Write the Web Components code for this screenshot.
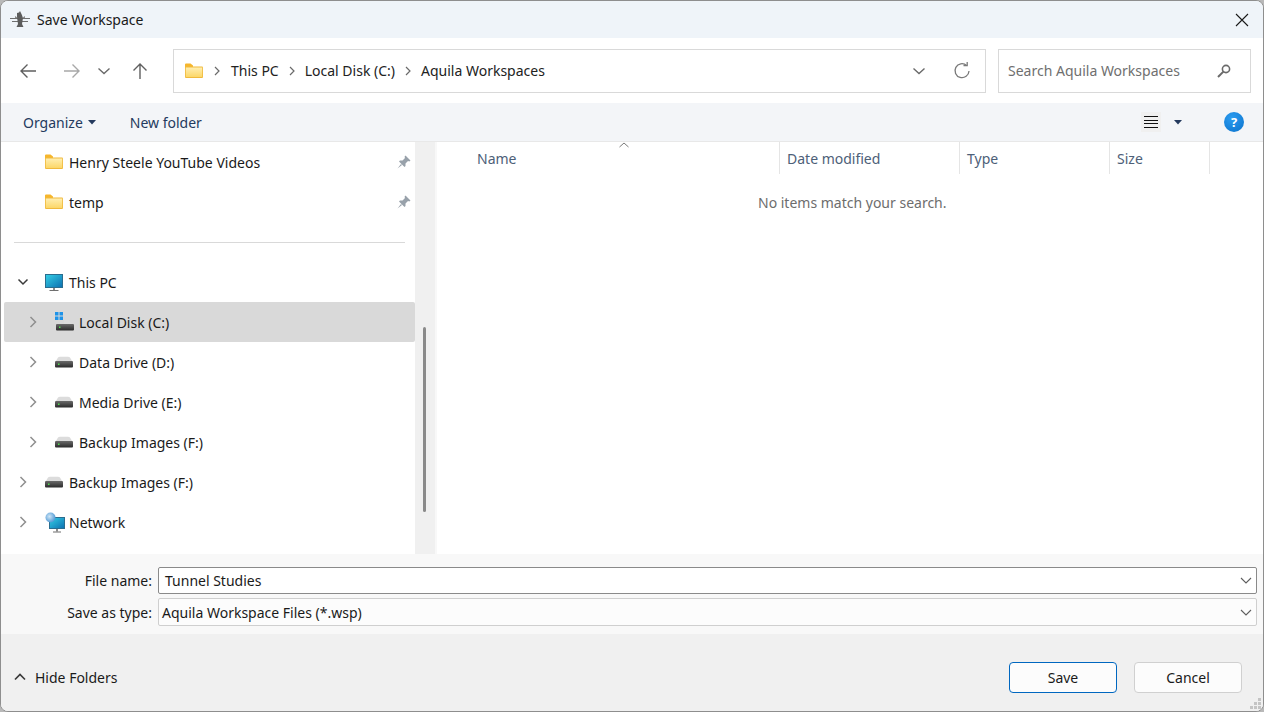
<!DOCTYPE html>
<html>
<head>
<meta charset="utf-8">
<title>Save Workspace</title>
<style>
    html, body { margin: 0; height: 100%; overflow: hidden; background: #b9b9b9; }
    body { font: 14px "Noto Sans", "Liberation Sans", sans-serif; color: #1a1a1a; }
</style>
</head>
<body>
<save-dialog>
    <title-strip slot="title">Save Workspace</title-strip>
    <nav-strip slot="nav"></nav-strip>
    <tool-strip slot="tools"></tool-strip>
    <tree-pane slot="tree">
        <tree-row icon="folder" pinned>Henry Steele YouTube Videos</tree-row>
        <tree-row icon="folder" pinned>temp</tree-row>
        <tree-sep></tree-sep>
        <tree-row icon="pc" toggle="open">This PC</tree-row>
        <tree-row icon="windisk" toggle="closed" level="2" selected>Local Disk (C:)</tree-row>
        <tree-row icon="disk" toggle="closed" level="2">Data Drive (D:)</tree-row>
        <tree-row icon="disk" toggle="closed" level="2">Media Drive (E:)</tree-row>
        <tree-row icon="disk" toggle="closed" level="2">Backup Images (F:)</tree-row>
        <tree-row icon="disk" toggle="closed">Backup Images (F:)</tree-row>
        <tree-row icon="network" toggle="closed">Network</tree-row>
    </tree-pane>
    <list-pane slot="list"></list-pane>
    <save-form slot="form"></save-form>
    <dialog-foot slot="foot"></dialog-foot>
</save-dialog>

<script>
    // all the little pictures live here, keyed by name
    const ICONS = {
        folder: `<svg width="18" height="16" viewBox="0 0 18 16">
            <defs><linearGradient id="f" x1="0" y1="0" x2="0" y2="1"><stop offset="0" stop-color="#ffeeb0"/><stop offset="1" stop-color="#fcd768"/></linearGradient></defs>
            <path d="M0 1.5A1 1 0 0 1 1 .5h4.5L8 2.5v2H0z" fill="#f6b62c"/>
            <path d="M0 3.5h17a1 1 0 0 1 1 1V14a1 1 0 0 1-1 1H1a1 1 0 0 1-1-1z" fill="#f0b93c"/>
            <path d="M.8 4.5h16.4V14H.8z" fill="url(#f)"/></svg>`,
        disk: `<svg width="18" height="12" viewBox="0 0 18 12">
            <defs><linearGradient id="d" x1="0" y1="0" x2="0" y2="1"><stop offset="0" stop-color="#6a6a6a"/><stop offset="1" stop-color="#2b2b2b"/></linearGradient></defs>
            <path d="M1 5 3 1.5Q3.600.8 5 .8h8q1.400 0 2 .7L17 5z" fill="#dcdcdc"/>
            <rect x="0" y="5" width="18" height="6.500" rx="1" fill="url(#d)"/>
            <rect x="3" y="7.500" width="1.500" height="1.500" fill="#4fe04f"/></svg>`,
        windisk: `<svg width="19" height="20" viewBox="0 0 19 20">
            <defs><linearGradient id="w" x1="0" y1="0" x2="0" y2="1"><stop offset="0" stop-color="#6a6a6a"/><stop offset="1" stop-color="#2b2b2b"/></linearGradient></defs>
            <path d="M9 8h5l3 4H9z" fill="#dcdcdc"/>
            <rect x="1" y="12" width="18" height="6.500" rx="1" fill="url(#w)"/>
            <rect x="4" y="14.500" width="1.500" height="1.500" fill="#4fe04f"/>
            <path d="M0 0h3.500v3.500H0zM4.500 0H8v3.500H4.500zM0 4.500h3.500V8H0zM4.500 4.500H8V8H4.500z" fill="#1f93e8"/></svg>`,
        pc: `<svg width="18" height="17" viewBox="0 0 18 17">
            <defs><linearGradient id="p" x1="0" y1="0" x2="1" y2="1"><stop offset="0" stop-color="#35d0e6"/><stop offset="1" stop-color="#0c6fb0"/></linearGradient></defs>
            <rect x=".5" y=".5" width="17" height="13" fill="url(#p)" stroke="#2a6d8f"/>
            <rect x="8" y="14" width="2" height="2" fill="#8a8a8a"/>
            <rect x="4.500" y="16" width="9" height="1" fill="#6f6f6f"/></svg>`,
        network: `<svg width="20" height="21" viewBox="0 0 20 21">
            <defs><linearGradient id="n" x1="0" y1="0" x2="1" y2="1"><stop offset="0" stop-color="#35d0e6"/><stop offset="1" stop-color="#0c6fb0"/></linearGradient>
            <radialGradient id="g" cx=".4" cy=".4" r=".7"><stop offset="0" stop-color="#cfe6f7"/><stop offset="1" stop-color="#3f8fd0"/></radialGradient></defs>
            <rect x="4.500" y="5.500" width="15" height="11" fill="url(#n)" stroke="#2a6d8f"/>
            <rect x="11" y="17" width="2" height="2.500" fill="#8a8a8a"/>
            <rect x="8" y="19.500" width="8" height="1" fill="#6f6f6f"/>
            <circle cx="5.500" cy="5.500" r="5" fill="url(#g)"/></svg>`,
        pin: `<svg width="14" height="14" viewBox="0 0 14 14">
            <path d="M8.500.5 13.500 5.500 12.300 6.500 11 6 8.500 8.500 8.500 11 7.500 12 2 6.500 3 5.500 5.500 5.500 8 3 7.500 1.700z" fill="#98a1aa"/>
            <path d="M.5 13.500 4 9l1 1z" fill="#98a1aa"/></svg>`,
        open: `<svg width="16" height="16" viewBox="0 0 16 16"><path d="M3.500 5.500 8 10l4.500-4.500" fill="none" stroke="#3a3a3a" stroke-width="1.500"/></svg>`,
        closed: `<svg width="16" height="16" viewBox="0 0 16 16"><path d="M5.500 3 10.500 8l-5 5" fill="none" stroke="#8f8f8f" stroke-width="1.500"/></svg>`,
        back: `<svg width="18" height="16" viewBox="0 0 18 16"><path d="M17 8H2M8.500 1.500 2 8l6.500 6.500" fill="none" stroke="#5f5f5f" stroke-width="1.400"/></svg>`,
        forward: `<svg width="18" height="16" viewBox="0 0 18 16"><path d="M1 8h15M9.500 1.500 16 8l-6.500 6.500" fill="none" stroke="#a8a8a8" stroke-width="1.400"/></svg>`,
        recent: `<svg width="14" height="8" viewBox="0 0 14 8"><path d="M1.500 1.500 7 6.500l5.500-5" fill="none" stroke="#6a6a6a" stroke-width="1.400"/></svg>`,
        up: `<svg width="16" height="18" viewBox="0 0 16 18"><path d="M8 17V2M1.500 8.500 8 2l6.500 6.500" fill="none" stroke="#5f5f5f" stroke-width="1.400"/></svg>`,
        crumb: `<svg width="8" height="10" viewBox="0 0 8 10"><path d="M2 1 6 5 2 9" fill="none" stroke="#6a6a6a" stroke-width="1.200"/></svg>`,
        refresh: `<svg width="18" height="18" viewBox="0 0 18 18"><path d="M13.600 3.400A7 7 0 1 0 16 9" fill="none" stroke="#7a7a7a" stroke-width="1.300"/><path d="M10.500 3.600h3.700V0" fill="none" stroke="#7a7a7a" stroke-width="1.300"/></svg>`,
        search: `<svg width="14" height="14" viewBox="0 0 14 14"><circle cx="9" cy="5" r="3.600" fill="none" stroke="#6a6a6a" stroke-width="1.600"/><path d="M6.400 7.600 1 13" stroke="#6a6a6a" stroke-width="2"/></svg>`,
        close: `<svg width="14" height="14" viewBox="0 0 14 14"><path d="M1 1l12 12M13 1 1 13" stroke="#1a1a1a" stroke-width="1.100"/></svg>`,
        caret: `<svg width="8" height="5" viewBox="0 0 8 5"><path d="M0 0h8L4 4.500z" fill="#243a5e"/></svg>`,
        sort: `<svg width="10" height="6" viewBox="0 0 10 6"><path d="M.5 5 5 1l4.500 4" fill="none" stroke="#7a7a7a"/></svg>`,
        combo: `<svg width="12" height="7" viewBox="0 0 12 7"><path d="M1 1 6 6l5-5" fill="none" stroke="#5f5f5f" stroke-width="1.100"/></svg>`,
        hide: `<svg width="12" height="8" viewBox="0 0 12 8"><path d="M1 6.500 6 1.500l5 5" fill="none" stroke="#3a3a3a" stroke-width="1.700"/></svg>`,
        eagle: `<svg width="20" height="17" viewBox="0 0 20 17">
            <path d="M0 7h20v1H0zM2 10h16v1H2z" fill="#6f6f6f"/>
            <path d="M7 2 9 1.500 10 0l1.500 3L13 7 12 13l1.500 3h-7L8 13 7 6.500z" fill="#5c5c5c"/>
            <path d="M5 5 8 7H5zM15 5l-3 2h3z" fill="#8a8a8a"/></svg>`,
        grip: `<svg width="12" height="12" viewBox="0 0 12 12"><path d="M8 0h3v3H8zM4 4h3v3H4zM8 4h3v3H8zM0 8h3v3H0zM4 8h3v3H4zM8 8h3v3H8z" fill="#c4c4c4"/></svg>`
    };

    class WinIcon extends HTMLElement {
        constructor() {
            super();
            const shadow = this.attachShadow({ mode: "open" });
            shadow.innerHTML = `<style>:host { display: inline-flex; flex: none; align-items: center; justify-content: center; } svg { display: block; }</style>`
                + (ICONS[this.getAttribute('name')] || '');
        }
    }
    customElements.define('win-icon', WinIcon);

    const dialogTemplate = document.createElement('template');
    dialogTemplate.innerHTML = `
        <style>
            :host {
                display: flex;
                flex-direction: column;
                box-sizing: border-box;
                width: 1264px;
                height: 712px;
                border: 1px solid #8e8e8e;
                border-radius: 8px;
                overflow: hidden;
                background: #fff;
            }
            .body { display: flex; height: 412px; background: #fff; }
        </style>
        <slot name="title"></slot>
        <slot name="nav"></slot>
        <slot name="tools"></slot>
        <div class="body">
            <slot name="tree"></slot>
            <slot name="list"></slot>
        </div>
        <slot name="form"></slot>
        <slot name="foot"></slot>
    `;
    class SaveDialog extends HTMLElement {
        constructor() {
            super();
            this.attachShadow({ mode: "open" }).append(dialogTemplate.content.cloneNode(true));
        }
    }
    customElements.define('save-dialog', SaveDialog);

    const titleTemplate = document.createElement('template');
    titleTemplate.innerHTML = `
        <style>
            :host {
                display: flex;
                align-items: center;
                height: 37px;
                padding: 0 14px 0 9px;
                background: #eff4f9;
                font-size: 14px;
            }
            .text { margin-left: 7px; flex: 1; }
        </style>
        <win-icon name="eagle"></win-icon>
        <span class="text"><slot></slot></span>
        <win-icon name="close"></win-icon>
    `;
    class TitleStrip extends HTMLElement {
        constructor() {
            super();
            this.attachShadow({ mode: "open" }).append(titleTemplate.content.cloneNode(true));
        }
    }
    customElements.define('title-strip', TitleStrip);

    const navTemplate = document.createElement('template');
    navTemplate.innerHTML = `
        <style>
            :host {
                display: flex;
                align-items: center;
                height: 65px;
                padding: 0 12px 0 18px;
                background: #fff;
                font-size: 14px;
            }
            .arrows { display: flex; align-items: center; width: 154px; }
            .arrows win-icon:nth-child(1) { margin-right: 26px; }
            .arrows win-icon:nth-child(2) { margin-right: 16px; }
            .arrows win-icon:nth-child(3) { margin-right: 21px; }
            .address, .search {
                display: flex;
                align-items: center;
                box-sizing: border-box;
                height: 44px;
                border: 1px solid #d9d9d9;
                border-width: 1.500px;
            }
            .address { width: 813px; padding: 0 14px 0 11px; margin-right: 12px; }
            .address span { margin: 0 8px; color: #222; }
            .address span:first-of-type { margin-left: 9px; }
            .address win-icon[name=crumb] { margin: 0 1px; }
            .spacer { flex: 1; }
            .search { width: 253px; padding: 0 19px 0 9px; color: #6f6f6f; }
            .search span { flex: 1; }
        </style>
        <div class="arrows">
            <win-icon name="back"></win-icon>
            <win-icon name="forward"></win-icon>
            <win-icon name="recent"></win-icon>
            <win-icon name="up"></win-icon>
        </div>
        <div class="address">
            <win-icon name="folder"></win-icon>
            <win-icon name="crumb" style="margin-left:10px"></win-icon>
            <span>This PC</span>
            <win-icon name="crumb"></win-icon>
            <span>Local Disk (C:)</span>
            <win-icon name="crumb"></win-icon>
            <span>Aquila Workspaces</span>
            <div class="spacer"></div>
            <win-icon name="recent" style="margin-right:27px"></win-icon>
            <win-icon name="refresh"></win-icon>
        </div>
        <div class="search">
            <span>Search Aquila Workspaces</span>
            <win-icon name="search"></win-icon>
        </div>
    `;
    class NavStrip extends HTMLElement {
        constructor() {
            super();
            this.attachShadow({ mode: "open" }).append(navTemplate.content.cloneNode(true));
        }
    }
    customElements.define('nav-strip', NavStrip);

    const toolTemplate = document.createElement('template');
    toolTemplate.innerHTML = `
        <style>
            :host {
                display: flex;
                align-items: center;
                box-sizing: content-box;
                height: 38px;
                padding: 0 19px 0 22px;
                background: #f3f5f8;
                border-bottom: 1px solid #e8e8e8;
                color: #243a5e;
                font-size: 14px;
            }
            .organize { display: flex; align-items: center; gap: 5px; margin-right: 34px; }
            .spacer { flex: 1; }
            .lines {
                display: flex;
                flex-direction: column;
                justify-content: space-between;
                box-sizing: border-box;
                width: 20px;
                height: 20px;
                padding: 4px 3px;
                background: #f0f0f0;
                margin-right: 13px;
            }
            .lines i { display: block; height: 1px; background: #111; }
            .help {
                display: flex;
                align-items: center;
                justify-content: center;
                width: 20px;
                height: 20px;
                margin-left: 42px;
                border-radius: 50%;
                background: radial-gradient(circle at 40% 30%, #2c9cf0, #0a72cc);
                color: #fff;
                font-size: 13px;
                font-weight: 700;
            }
        </style>
        <div class="organize"><span>Organize</span><win-icon name="caret"></win-icon></div>
        <span>New folder</span>
        <div class="spacer"></div>
        <div class="lines"><i></i><i></i><i></i><i></i></div>
        <win-icon name="caret"></win-icon>
        <div class="help">?</div>
    `;
    class ToolStrip extends HTMLElement {
        constructor() {
            super();
            this.attachShadow({ mode: "open" }).append(toolTemplate.content.cloneNode(true));
        }
    }
    customElements.define('tool-strip', ToolStrip);

    const treeTemplate = document.createElement('template');
    treeTemplate.innerHTML = `
        <style>
            :host { display: flex; flex: none; width: 436px; }
            .rows { box-sizing: border-box; width: 414px; padding-left: 3px; }
            .track { width: 20px; background: #f0f0f0; }
            .thumb { width: 3px; height: 185px; margin: 185px 0 0 8px; border-radius: 2px; background: #8a8a8a; }
            .edge { width: 2px; background: #f8f8f8; }
        </style>
        <div class="rows"><slot></slot></div>
        <div class="track"><div class="thumb"></div></div>
        <div class="edge"></div>
    `;
    class TreePane extends HTMLElement {
        constructor() {
            super();
            this.attachShadow({ mode: "open" }).append(treeTemplate.content.cloneNode(true));
        }
    }
    customElements.define('tree-pane', TreePane);

    class TreeRow extends HTMLElement {
        constructor() {
            super();
            const level = Number(this.getAttribute('level') || 1);
            const toggle = this.getAttribute('toggle');
            const shadow = this.attachShadow({ mode: "open" });
            shadow.innerHTML = `
                <style>
                    :host {
                        display: flex;
                        align-items: center;
                        height: 40px;
                        padding: 0 4px 0 ${11 + (level - 1) * 10}px;
                        border-radius: 2px;
                        font-size: 14px;
                    }
                    :host([selected]) { background: #d9d9d9; }
                    .toggle { width: 16px; height: 16px; margin-right: 14px; }
                    .icon { display: flex; align-items: center; justify-content: flex-start; width: 18px; margin-right: 6px; }
                    .text { flex: 1; }
                </style>
                <div class="toggle">${toggle ? `<win-icon name="${toggle}"></win-icon>` : ''}</div>
                <div class="icon"><win-icon name="${this.getAttribute('icon')}"></win-icon></div>
                <span class="text"><slot></slot></span>
                ${this.hasAttribute('pinned') ? '<win-icon name="pin"></win-icon>' : ''}
            `;
        }
    }
    customElements.define('tree-row', TreeRow);

    class TreeSep extends HTMLElement {
        constructor() {
            super();
            this.attachShadow({ mode: "open" }).innerHTML = `
                <style>:host { display: block; height: 1px; margin: 20px 10px 19px; background: #d9d9d9; }</style>`;
        }
    }
    customElements.define('tree-sep', TreeSep);

    const listTemplate = document.createElement('template');
    listTemplate.innerHTML = `
        <style>
            :host { display: block; flex: 1; position: relative; font-size: 14px; }
            .head { display: flex; height: 32px; color: #4d6078; }
            .col {
                box-sizing: border-box;
                display: flex;
                align-items: center;
                border-right: 1px solid #e5e5e5;
                padding-left: 7px;
            }
            .name { width: 343px; padding-left: 40px; }
            .date { width: 180px; }
            .type { width: 150px; }
            .size { width: 100px; }
            .empty { margin-top: 19px; padding-left: 321px; color: #6d6d6d; line-height: 20px; }
            .sort { position: absolute; left: 182px; top: 0; }
        </style>
        <div class="head">
            <div class="col name">Name</div>
            <div class="col date">Date modified</div>
            <div class="col type">Type</div>
            <div class="col size">Size</div>
        </div>
        <win-icon class="sort" name="sort"></win-icon>
        <div class="empty">No items match your search.</div>
    `;
    class ListPane extends HTMLElement {
        constructor() {
            super();
            this.attachShadow({ mode: "open" }).append(listTemplate.content.cloneNode(true));
        }
    }
    customElements.define('list-pane', ListPane);

    const formTemplate = document.createElement('template');
    formTemplate.innerHTML = `
        <style>
            :host {
                display: grid;
                grid-template-columns: 151px 1fr;
                grid-template-rows: 27px 28px;
                row-gap: 4px;
                column-gap: 6px;
                align-items: center;
                box-sizing: border-box;
                height: 80px;
                padding: 13px 6px 0 0;
                background: #f8f8f8;
                font-size: 14px;
            }
            label { text-align: right; }
            .box {
                display: flex;
                align-items: center;
                box-sizing: border-box;
                height: 100%;
                padding-right: 4px;
                border-radius: 2px;
            }
            .box span { flex: 1; }
            .name { border: 1px solid #8a8a8a; background: #fff; padding-left: 6px; }
            .type { border: 1px solid #cfcfcf; background: #fcfcfc; padding-left: 3px; }
        </style>
        <label>File name:</label>
        <div class="box name"><span>Tunnel Studies</span><win-icon name="combo"></win-icon></div>
        <label>Save as type:</label>
        <div class="box type"><span>Aquila Workspace Files (*.wsp)</span><win-icon name="combo"></win-icon></div>
    `;
    class SaveForm extends HTMLElement {
        constructor() {
            super();
            this.attachShadow({ mode: "open" }).append(formTemplate.content.cloneNode(true));
        }
    }
    customElements.define('save-form', SaveForm);

    const footTemplate = document.createElement('template');
    footTemplate.innerHTML = `
        <style>
            :host {
                display: flex;
                align-items: center;
                position: relative;
                box-sizing: border-box;
                height: 77px;
                padding: 9px 21px 0 13px;
                background: #f0f0f0;
                font-size: 14px;
            }
            .hide { display: flex; align-items: center; gap: 9px; flex: 1; }
            button {
                box-sizing: border-box;
                width: 108px;
                height: 31px;
                margin-left: 17px;
                border: 1px solid #d0d0d0;
                border-radius: 4px;
                background: #fcfcfc;
                color: #1a1a1a;
                font: inherit;
            }
            button.primary { border-color: #0067c0; }
            .grip { position: absolute; right: 1px; bottom: 1px; }
        </style>
        <div class="hide"><win-icon name="hide"></win-icon><span>Hide Folders</span></div>
        <button class="primary">Save</button>
        <button>Cancel</button>
        <win-icon class="grip" name="grip"></win-icon>
    `;
    class DialogFoot extends HTMLElement {
        constructor() {
            super();
            this.attachShadow({ mode: "open" }).append(footTemplate.content.cloneNode(true));
        }
    }
    customElements.define('dialog-foot', DialogFoot);
</script>
</body>
</html>
